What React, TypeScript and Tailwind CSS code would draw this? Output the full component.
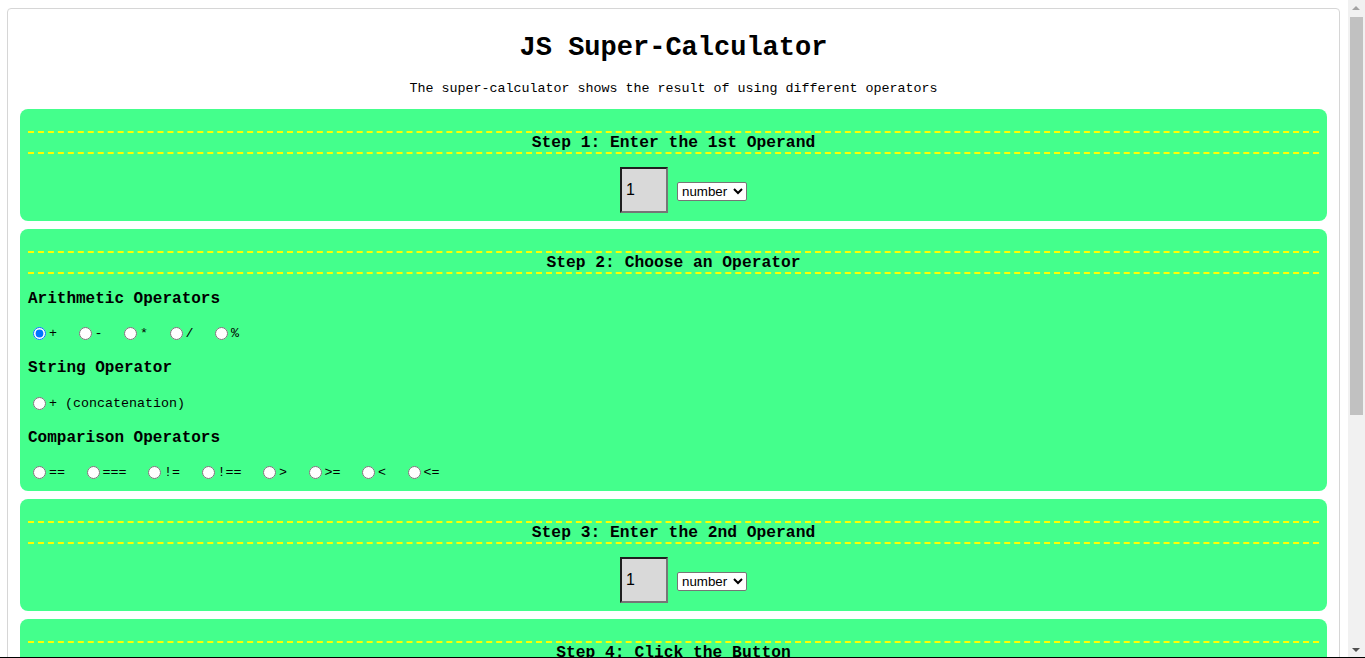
import { useState } from "react";

const arithmetic = ["+", "-", "*", "/", "%"];
const comparison = ["==", "===", "!=", "!==", ">", ">=", "<", "<="];

function StepTitle({ children }: { children: React.ReactNode }) {
  return (
    <h3 className="border-y-2 border-dashed border-[#ffff00] text-center text-[16.3px] leading-[19px] font-bold text-black">
      {children}
    </h3>
  );
}

function OperandInput({ name }: { name: string }) {
  return (
    <div className="mt-[13px] flex items-center justify-center gap-[9px] pl-[20px]">
      <input
        type="text"
        name={name}
        defaultValue="1"
        className="h-[46px] w-[48px] border-2 border-t-[#1e1e1e] border-l-[#1e1e1e] border-b-[#767676] border-r-[#767676] bg-[#d9d9d9] pl-[4px] font-['Liberation_Sans',Arial,sans-serif] text-[16px] text-black outline-none"
      />
      <select
        defaultValue="number"
        className="mt-[3px] h-[19px] w-[70px] rounded-[2px] border border-[#767676] bg-white font-['Liberation_Sans',Arial,sans-serif] text-[13.33px] text-black"
      >
        <option value="number">number</option>
        <option value="string">string</option>
        <option value="boolean">boolean</option>
      </select>
    </div>
  );
}

// the page's vertical scrollbar, drawn over the right edge
function Scrollbar() {
  return (
    <div className="fixed top-0 right-0 h-screen w-[17px] bg-[#f1f1f1]">
      <div className="absolute top-[6px] left-[4px] h-0 w-0 border-x-[4px] border-b-[4px] border-x-transparent border-b-[#a3a3a3]" />
      <div className="absolute top-[17px] left-[2px] h-[398px] w-[13px] bg-[#c1c1c1]" />
      <div className="absolute bottom-[6px] left-[4px] h-0 w-0 border-x-[4px] border-t-[4px] border-x-transparent border-t-[#505050]" />
    </div>
  );
}

export default function App() {
  const [op, setOp] = useState("+");

  return (
    <div className="min-h-[900px] bg-white font-['Liberation_Mono','Courier_New',monospace] text-black">
      <div className="mt-2 ml-[7px] mr-[25px] rounded-[4px] border border-[#d6d6d6] px-3 pt-[24px] pb-4">
        <h1 className="text-center text-[27px] leading-[31px] font-bold">JS Super-Calculator</h1>
        <p className="mt-[17px] text-center text-[13.33px] leading-[16px]">
          The super-calculator shows the result of using different operators
        </p>

        <div className="mt-[12px] flex flex-col gap-2">
          {/* Step 1 */}
          <div className="rounded-lg bg-[#44ff8c] px-2 pt-[22px] pb-2">
            <StepTitle>Step 1: Enter the 1st Operand</StepTitle>
            <OperandInput name="first" />
          </div>

          {/* Step 2 */}
          <div className="rounded-lg bg-[#44ff8c] px-2 pt-[22px] pb-[9px]">
            <StepTitle>Step 2: Choose an Operator</StepTitle>

            <h4 className="mt-4 text-[16px] leading-[19px] font-bold">Arithmetic Operators</h4>
            <div className="mt-[15px] flex h-[19px] items-center text-[13.33px]">
              {arithmetic.map((o) => (
                <label key={o} className="flex items-center">
                  <input
                    type="radio"
                    name="op"
                    checked={op === o}
                    onChange={() => setOp(o)}
                    className="ml-[5px] mr-[3px] h-[13px] w-[13px]"
                  />
                  <span className="mr-[16.5px] leading-[16px]">{o}</span>
                </label>
              ))}
            </div>

            <h4 className="mt-4 text-[16px] leading-[19px] font-bold">String Operator</h4>
            <div className="mt-4 flex h-[19px] items-center text-[13.33px]">
              <label className="flex items-center">
                <input
                  type="radio"
                  name="op"
                  checked={op === "concat"}
                  onChange={() => setOp("concat")}
                  className="ml-[5px] mr-[3px] h-[13px] w-[13px]"
                />
                <span className="leading-[16px]">+ (concatenation)</span>
              </label>
            </div>

            <h4 className="mt-4 text-[16px] leading-[19px] font-bold">Comparison Operators</h4>
            <div className="mt-[15px] flex h-[19px] items-center text-[13.33px]">
              {comparison.map((o) => (
                <label key={o} className="flex items-center">
                  <input
                    type="radio"
                    name="op"
                    checked={op === o}
                    onChange={() => setOp(o)}
                    className="ml-[5px] mr-[3px] h-[13px] w-[13px]"
                  />
                  <span className="mr-[16.5px] leading-[16px]">{o}</span>
                </label>
              ))}
            </div>
          </div>

          {/* Step 3 */}
          <div className="rounded-lg bg-[#44ff8c] px-2 pt-[22px] pb-2">
            <StepTitle>Step 3: Enter the 2nd Operand</StepTitle>
            <OperandInput name="second" />
          </div>

          {/* Step 4 */}
          <div className="rounded-lg bg-[#44ff8c] px-2 pt-[22px] pb-2">
            <StepTitle>Step 4: Click the Button</StepTitle>
            <div className="mt-[13px] flex justify-center">
              <button className="rounded-[3px] border border-[#767676] bg-[#efefef] px-3 py-1 font-['Liberation_Sans',Arial,sans-serif] text-[13.33px]">
                Calculate
              </button>
            </div>
          </div>

          {/* Step 5 */}
          <div className="rounded-lg bg-[#44ff8c] px-2 pt-[22px] pb-2">
            <StepTitle>Step 5: See the Result</StepTitle>
            <p className="mt-[13px] text-center text-[16px] leading-[19px]">&nbsp;</p>
          </div>
        </div>
      </div>

      <Scrollbar />
      <div className="fixed bottom-0 left-0 h-px w-full bg-black" />
    </div>
  );
}
